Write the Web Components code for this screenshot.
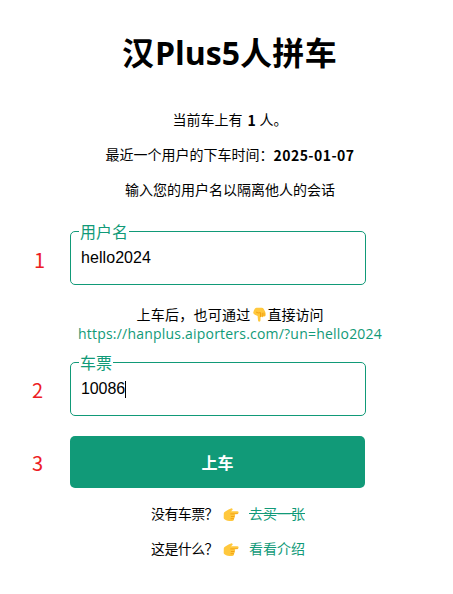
<!DOCTYPE html>
<html lang="zh-CN">
<head>
<meta charset="utf-8">
<title>汉Plus5人拼车</title>
<style>
html,body{margin:0;background:#fff}
body{font-family:"Open Sans","Noto Sans CJK SC",sans-serif;color:#000}
</style>
</head>
<body>
<ride-page></ride-page>
<script>
// Sets a run of text to a given advance width by spacing its letters evenly.
class TextRun extends HTMLElement{
  connectedCallback(){
    const root=this.attachShadow({mode:'open'});
    root.innerHTML='<style>:host{display:inline-block;white-space:pre}span{display:inline-block}</style><span><slot></slot></span>';
    const w=+this.getAttribute('w'),s=root.querySelector('span'),n=[...this.textContent].length;
    if(w){
      const d=(w-s.getBoundingClientRect().width)/n;
      s.style.letterSpacing=d.toFixed(4)+'px';
      this.style.width=w+'px';
    }
  }
}
class HandIcon extends HTMLElement{
  connectedCallback(){
    const down=this.getAttribute('dir')==='down';
    this.attachShadow({mode:'open'}).innerHTML=down?
    `<style>:host{display:block;white-space:normal;width:17px;height:15px;flex:none}svg{display:block}</style>
    <svg width="17" height="15" viewBox="0 0 17 15"><path fill="#ffc83d" d="M5.500.8h5.200q1.400 0 2.200 1.400l1.200 2.200q.6 1.300.6 3.400 0 1.700-1.100 1.700-.7 0-.9-.6-.2 1.300-1.300 1.300-.8 0-1-.6-.2.7-.9.700v3q0 1.400-1.300 1.400-1.200 0-1.200-1.400l-.4-4.300-2.200-.9Q2.300 7.100 2.200 5.700 2.800 2.700 4 1.400 4.700.8 5.500.8Z"/><path d="M5.400 5.300q1.700 1.300 4.100.3v4M11.300 6.200v3M13 6v2.500" fill="none" stroke="#ef9400" stroke-width=".7" stroke-linecap="round"/></svg>`:
    `<style>:host{display:block;white-space:normal;width:16px;height:14px;flex:none}svg{display:block}</style>
    <svg width="16" height="14" viewBox="0 0 16 14"><path fill="#ffc83d" d="M.8 5.300Q1 4 2.300 3.400L5.600 1.600 8 .5q1-.4 1.500.4.500.9-.3 1.400L8 3.300l6.300-.1q1.300 0 1.300 1.200 0 1.300-1.300 1.400l-2.900.2q.8.400.7 1.300 0 .8-.7 1.100.5.500.3 1.200-.2.800-.9 1 .4.500.1 1.200-.4 1.200-2 1.200H6.500Q4.500 13 3 12.200L1.500 11.300Q.7 10.800.7 9.700Z"/><path d="M14.500 5.600l-3.200.3H7.700M11.300 8.500H8.300M10.700 10.700H8" fill="none" stroke="#ef9400" stroke-width=".7" stroke-linecap="round"/></svg>`;
  }
}
class StepRow extends HTMLElement{
  connectedCallback(){
    this.attachShadow({mode:'open'}).innerHTML=`<style>
    :host{display:grid;grid-template-columns:70px 296px;align-items:center}
    b{font:400 20px/24px "Noto Sans CJK SC",sans-serif;color:#ed1c24;padding-left:32px;padding-top:1px}
    :host([n="1"]) b{padding-left:34px;padding-top:3px}
    </style><b>${this.getAttribute('n')}</b><slot></slot>`;
  }
}
class OutlinedField extends HTMLElement{
  connectedCallback(){
    this.attachShadow({mode:'open'}).innerHTML=`<style>
    :host{display:block;box-sizing:border-box;width:296px;height:54px;border:1px solid #119a78;border-radius:5px;padding:0 10px}
    .l{display:block;width:max-content;height:18px;margin:-11px 0 0 -2px;padding:0 1px;background:#fff;color:#119a78;font:400 16px/20px "Noto Sans CJK SC",sans-serif}
    .v{display:flex;align-items:center;height:20px;margin-top:9px;font:16px/20px "Liberation Sans",Arial,sans-serif;color:#000}
    i{width:1px;height:17px;background:#000}
    </style><span class="l">${this.getAttribute('label')}</span><span class="v"><slot></slot>${this.hasAttribute('caret')?'<i></i>':''}</span>`;
  }
}
class RideButton extends HTMLElement{
  connectedCallback(){
    this.attachShadow({mode:'open'}).innerHTML=`<style>
    :host{display:block;width:295px}
    button{display:block;width:295px;height:52px;border:0;border-radius:5px;padding:0;background:#119a78;color:#fff;font:700 16px/50px "Noto Sans CJK SC",sans-serif}
    </style><button><slot></slot></button>`;
  }
}
class RidePage extends HTMLElement{
  connectedCallback(){
    this.attachShadow({mode:'open'}).innerHTML=`<style>
    :host{display:block;width:453px;height:594px;overflow:hidden;background:#fff}
    h1{display:flex;justify-content:center;width:459px;height:48px;margin:0;padding-top:29px;font:700 32px/48px "Open Sans","Noto Sans CJK SC",sans-serif}
    p{display:flex;align-items:center;justify-content:center;width:460px;height:20px;margin:0 0 15px;font-size:14px;line-height:20px}
    .first{margin-top:33px}
    .first b{margin:0 4px 0 5px}
    b{font-family:"Noto Sans CJK SC",sans-serif}
    .hint{margin:20px 0 0;height:19px}
    .url{margin:0 0 18px;height:20px;color:#119a78}
    .question{justify-content:flex-start;box-sizing:border-box;padding-left:151px}
    .question text-run{flex:none}
    hand-icon.r{margin:1px 10px 0 5px}
    a{color:#119a78}
    .sold{text-decoration:line-through}
    .go{margin:20px 0 16px}
    .user{margin-top:31px}
    </style>
    <h1><text-run w="33">汉</text-run><text-run w="85">Plus5</text-run><text-run w="97">人拼车</text-run></h1>
    <p class="first"><text-run w="70">当前车上有</text-run><b><text-run w="8">1</text-run></b><text-run w="28">人。</text-run></p>
    <p><text-run w="168">最近一个用户的下车时间：</text-run><b><text-run w="81">2025-01-07</text-run></b></p>
    <p><text-run w="210">输入您的用户名以隔离他人的会话</text-run></p>
    <step-row class="user" n="1"><outlined-field label="用户名"><text-run w="70">hello2024</text-run></outlined-field></step-row>
    <p class="hint"><text-run w="114">上车后，也可通过</text-run><hand-icon dir="down"></hand-icon><text-run w="56">直接访问</text-run></p>
    <p class="url"><text-run w="304">https://hanplus.aiporters.com/?un=hello2024</text-run></p>
    <step-row n="2"><outlined-field label="车票" caret><text-run w="44">10086</text-run></outlined-field></step-row>
    <step-row class="go" n="3"><ride-button>上车</ride-button></step-row>
    <p class="question"><text-run w="67">没有车票？</text-run><hand-icon class="r"></hand-icon><a class="sold">去买一张</a></p>
    <p class="question"><text-run w="67">这是什么？</text-run><hand-icon class="r"></hand-icon><a>看看介绍</a></p>`;
  }
}
customElements.define('text-run',TextRun);
customElements.define('hand-icon',HandIcon);
customElements.define('step-row',StepRow);
customElements.define('outlined-field',OutlinedField);
customElements.define('ride-button',RideButton);
customElements.define('ride-page',RidePage);
</script>
</body>
</html>
